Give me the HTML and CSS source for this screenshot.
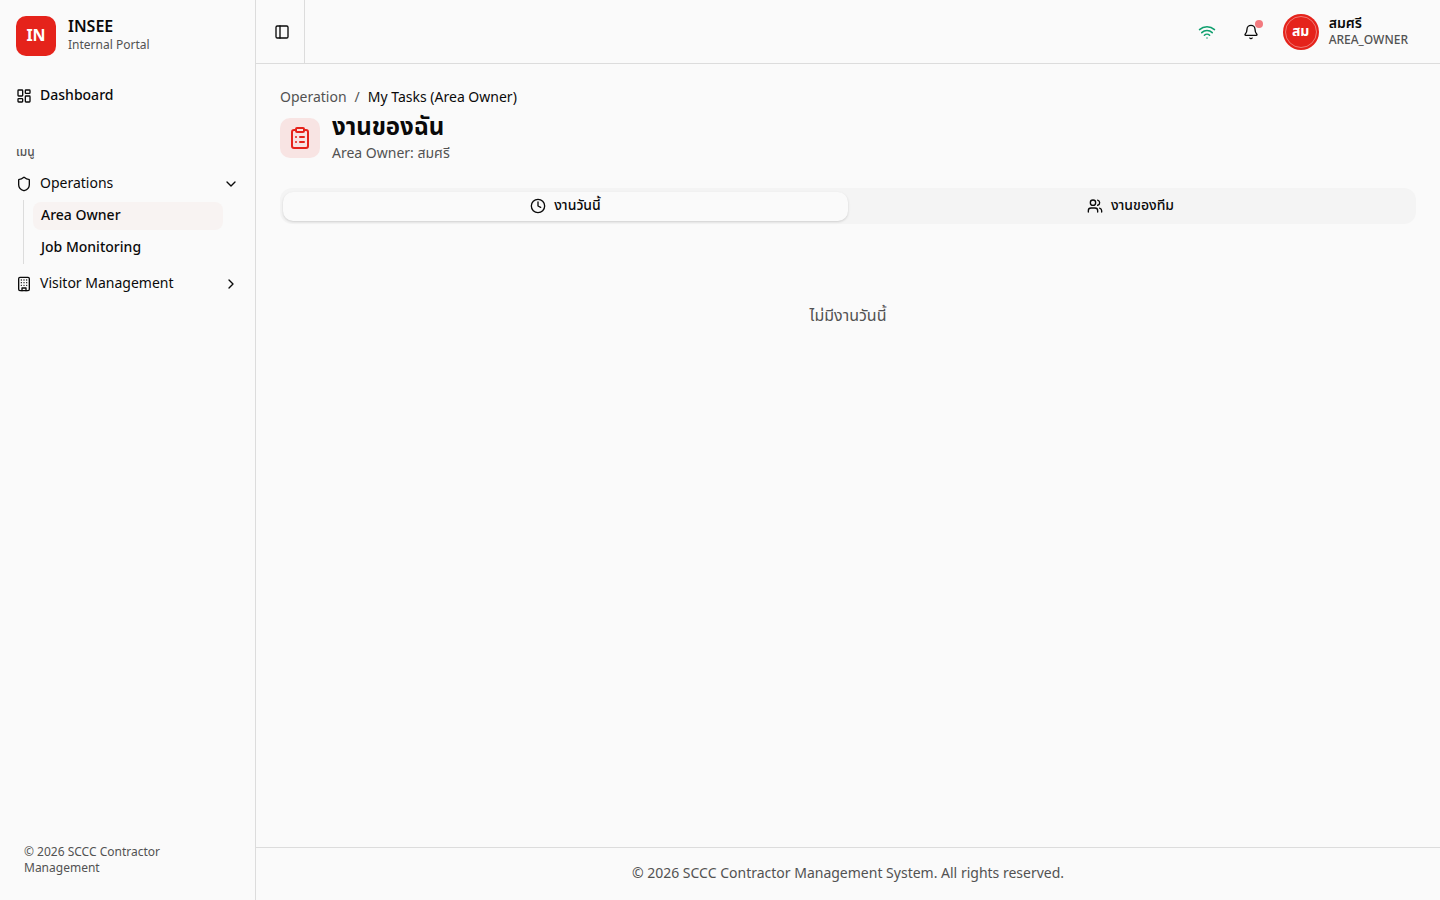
FILE: index.html
```html
<!DOCTYPE html>
<html lang="th">
<head>
  <meta charset="UTF-8" />
  <title>INSEE Internal Portal</title>
  <meta name="viewport" content="width=device-width, initial-scale=1.0" />
  <link rel="stylesheet" href="styles.css">
</head>
<body>

<div class="layout">

  <!-- Sidebar -->
  <aside class="sidebar">
    <div class="brand">
      <div class="brand-logo">IN</div>
      <div class="brand-text">
        <div class="brand-name">INSEE</div>
        <div class="brand-sub">Internal Portal</div>
      </div>
    </div>

    <nav class="nav">
      <a href="#" class="nav-item medium">
        <svg class="icon" viewBox="0 0 24 24"><rect width="7" height="9" x="3" y="3" rx="1"/><rect width="7" height="5" x="14" y="3" rx="1"/><rect width="7" height="9" x="14" y="12" rx="1"/><rect width="7" height="5" x="3" y="16" rx="1"/></svg>
        <span>Dashboard</span>
      </a>

      <div class="nav-label">เมนู</div>

      <button type="button" class="nav-item" aria-expanded="true">
        <svg class="icon" viewBox="0 0 24 24"><path d="M20 13c0 5-3.500 7.500-7.660 8.950a1 1 0 0 1-.67-.01C7.500 20.500 4 18 4 13V6a1 1 0 0 1 1-1c2 0 4.500-1.200 6.240-2.720a1.170 1.170 0 0 1 1.520 0C14.510 3.810 17 5 19 5a1 1 0 0 1 1 1z"/></svg>
        <span>Operations</span>
        <svg class="icon chevron" viewBox="0 0 24 24"><path d="m6 9 6 6 6-6"/></svg>
      </button>
      <div class="sub-nav">
        <a href="#" class="sub-item active">Area Owner</a>
        <a href="#" class="sub-item">Job Monitoring</a>
      </div>

      <button type="button" class="nav-item" aria-expanded="false">
        <svg class="icon" viewBox="0 0 24 24"><rect width="16" height="20" x="4" y="2" rx="2"/><path d="M9 22v-4h6v4M8 6h.01M16 6h.01M12 6h.01M12 10h.01M12 14h.01M16 10h.01M16 14h.01M8 10h.01M8 14h.01"/></svg>
        <span>Visitor Management</span>
        <svg class="icon chevron" viewBox="0 0 24 24"><path d="m9 18 6-6-6-6"/></svg>
      </button>
    </nav>

    <div class="sidebar-footer">© 2026 SCCC Contractor Management</div>
  </aside>

  <div class="page">
    <!-- Top bar -->
    <header class="topbar">
      <div class="toggle-cell">
        <button type="button" class="icon-btn" aria-label="Toggle sidebar">
          <svg class="icon" viewBox="0 0 24 24"><rect width="18" height="18" x="3" y="3" rx="2"/><path d="M9 3v18"/></svg>
        </button>
      </div>
      <div class="topbar-right">
        <svg class="icon wifi" viewBox="0 0 24 24"><path d="M12 20h.01"/><path d="M2 8.820a15 15 0 0 1 20 0"/><path d="M5 12.859a10 10 0 0 1 14 0"/><path d="M8.500 16.429a5 5 0 0 1 7 0"/></svg>
        <button type="button" class="icon-btn bell" aria-label="Notifications">
          <svg class="icon" viewBox="0 0 24 24"><path d="M10.268 21a2 2 0 0 0 3.464 0"/><path d="M3.262 15.326A1 1 0 0 0 4 17h16a1 1 0 0 0 .74-1.673C19.410 13.956 18 12.499 18 8A6 6 0 0 0 6 8c0 4.499-1.411 5.956-2.738 7.326"/></svg>
          <span class="dot"></span>
        </button>
        <button type="button" class="user">
          <span class="avatar"><span class="avatar-inner">สม</span></span>
          <span class="user-text">
            <span class="user-name">สมศรี</span>
            <span class="user-role">AREA_OWNER</span>
          </span>
        </button>
      </div>
    </header>

    <main class="content">
      <nav class="breadcrumb" aria-label="Breadcrumb">
        <a href="#">Operation</a>
        <span>/</span>
        <span class="current">My Tasks (Area Owner)</span>
      </nav>

      <div class="heading">
        <div class="heading-icon">
          <svg class="icon" viewBox="0 0 24 24"><rect width="8" height="4" x="8" y="2" rx="1" ry="1"/><path d="M16 4h2a2 2 0 0 1 2 2v14a2 2 0 0 1-2 2H6a2 2 0 0 1-2-2V6a2 2 0 0 1 2-2h2"/><path d="M12 11h4M12 16h4M8 11h.01M8 16h.01"/></svg>
        </div>
        <div>
          <h1>งานของฉัน</h1>
          <p>Area Owner: สมศรี</p>
        </div>
      </div>

      <div class="tabs" role="tablist">
        <button type="button" class="tab active" role="tab" aria-selected="true">
          <svg class="icon" viewBox="0 0 24 24"><circle cx="12" cy="12" r="10"/><path d="M12 6v6l4 2"/></svg>
          <span>งานวันนี้</span>
        </button>
        <button type="button" class="tab" role="tab" aria-selected="false">
          <svg class="icon" viewBox="0 0 24 24"><path d="M16 21v-2a4 4 0 0 0-4-4H6a4 4 0 0 0-4 4v2"/><circle cx="9" cy="7" r="4"/><path d="M22 21v-2a4 4 0 0 0-3-3.870"/><path d="M16 3.130a4 4 0 0 1 0 7.750"/></svg>
          <span>งานของทีม</span>
        </button>
      </div>

      <div class="empty" role="tabpanel">ไม่มีงานวันนี้</div>
    </main>

    <footer class="footer">© 2026 SCCC Contractor Management System. All rights reserved.</footer>
  </div>

</div>

</body>
</html>
```

FILE: styles.css
```css
* {
  margin: 0; padding: 0; box-sizing: border-box;
}

body {
  font-family: 'Noto Sans Thai', 'Noto Sans', sans-serif;
  font-size: 14px;
  line-height: 20px;
  background: #fafafa;
  color: #0a0a0a;
}

a { color: inherit; text-decoration: none; }

button {
  font: inherit;
  color: inherit;
  background: none;
  border: none;
  cursor: pointer;
}

.icon {
  width: 16px;
  height: 16px;
  flex-shrink: 0;
  fill: none;
  stroke: currentColor;
  stroke-width: 2;
  stroke-linecap: round;
  stroke-linejoin: round;
}

.layout {
  display: flex;
  min-height: 100vh;
}

/* Sidebar */
.sidebar {
  width: 256px;
  flex-shrink: 0;
  display: flex;
  flex-direction: column;
  border-right: 1px solid #dcdcdc;
}

.brand {
  display: flex;
  align-items: center;
  gap: 12px;
  padding: 16px;
}

.brand-logo {
  width: 40px;
  height: 40px;
  display: flex;
  align-items: center;
  justify-content: center;
  border-radius: 10px;
  background: #e5231b;
  color: #fff;
  font-size: 16px;
  font-weight: 700;
}

.brand-text { padding-bottom: 2px; }

.brand-name {
  font-size: 16px;
  font-weight: 600;
  line-height: 20px;
}

.brand-sub {
  font-size: 12px;
  line-height: 16px;
  color: #525252;
}

.nav {
  flex: 1;
  padding: 8px;
}

.nav-item {
  width: 100%;
  height: 32px;
  display: flex;
  align-items: center;
  gap: 8px;
  padding: 0 8px;
  border-radius: 8px;
  text-align: left;
}

.nav-item.medium { font-weight: 500; }

.chevron { margin-left: auto; }

.nav-label {
  height: 32px;
  margin-top: 24px;
  padding: 8px;
  font-size: 12px;
  line-height: 16px;
  font-weight: 500;
  color: #525252;
}

.sub-nav {
  display: flex;
  flex-direction: column;
  gap: 4px;
  margin: 0 24px 4px 15px;
  padding: 2px 0 2px 9px;
  border-left: 1px solid #dcdcdc;
}

.sub-item {
  height: 28px;
  padding: 4px 8px;
  border-radius: 8px;
  font-weight: 500;
}

.sub-item.active { background: #f8f3f2; }

.sidebar-footer {
  padding: 24px;
  font-size: 12px;
  line-height: 16px;
  color: #525252;
}

/* Top bar */
.page {
  flex: 1;
  min-width: 0;
  display: flex;
  flex-direction: column;
}

.topbar {
  height: 64px;
  display: flex;
  justify-content: space-between;
  border-bottom: 1px solid #dcdcdc;
}

.toggle-cell {
  display: flex;
  align-items: center;
  padding: 0 6px 0 10px;
  border-right: 1px solid #dcdcdc;
}

.icon-btn {
  width: 32px;
  height: 32px;
  display: flex;
  align-items: center;
  justify-content: center;
}

.topbar-right {
  display: flex;
  align-items: center;
  gap: 16px;
  padding-right: 32px;
}

.wifi {
  width: 24px;
  height: 24px;
  padding: 3px;
  color: #0f9f6e;
}

.bell { position: relative; }

.dot {
  position: absolute;
  top: 4px;
  right: 4px;
  width: 8px;
  height: 8px;
  border-radius: 50%;
  background: #f37a7f;
}

.user {
  display: flex;
  align-items: center;
  gap: 10px;
  text-align: left;
}

.avatar {
  width: 36px;
  height: 36px;
  padding: 2px;
  border-radius: 50%;
  background: #e5231b;
}

.avatar-inner {
  height: 32px;
  display: flex;
  align-items: center;
  justify-content: center;
  border: 1px solid #ef7a75;
  border-radius: 50%;
  color: #fff;
  font-size: 14px;
  font-weight: 700;
}

.user-text {
  display: flex;
  flex-direction: column;
  line-height: 16px;
}

.user-name { font-weight: 600; }

.user-role {
  font-size: 12px;
  font-weight: 500;
  color: #525252;
}

/* Content */
.content {
  flex: 1;
  padding: 24px;
}

.breadcrumb {
  display: flex;
  gap: 8px;
  color: #525252;
}

.breadcrumb .current { color: #0a0a0a; }

.heading {
  display: flex;
  align-items: center;
  gap: 12px;
  margin: 4px 0 24px;
}

.heading-icon {
  width: 40px;
  height: 40px;
  display: flex;
  align-items: center;
  justify-content: center;
  border-radius: 10px;
  background: #f8e4e3;
  color: #e5231b;
}

.heading-icon .icon {
  width: 24px;
  height: 24px;
}

h1 {
  font-size: 24px;
  font-weight: 700;
  line-height: 32px;
}

.heading p { color: #525252; }

.tabs {
  display: flex;
  align-items: center;
  height: 36px;
  padding: 3px;
  border-radius: 12px;
  background: #f4f4f4;
}

.tab {
  flex: 1;
  height: calc(100% - 1px);
  display: flex;
  align-items: center;
  justify-content: center;
  gap: 8px;
  border-radius: 10px;
  font-weight: 500;
}

.tab.active {
  background: #fafafa;
  box-shadow: 0 1px 3px rgba(0,0,0,0.1), 0 1px 2px rgba(0,0,0,0.06);
}

.empty {
  padding: 80px 0;
  text-align: center;
  font-size: 16px;
  line-height: 24px;
  color: #525252;
}

.footer {
  padding: 16px 24px;
  border-top: 1px solid #dcdcdc;
  text-align: center;
  color: #525252;
}
```
